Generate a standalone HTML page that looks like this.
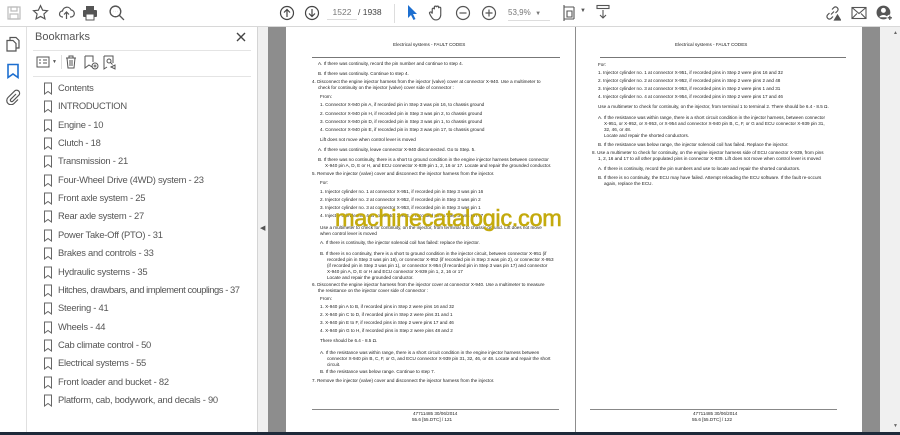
<!DOCTYPE html>
<html><head><meta charset="utf-8"><style>
*{margin:0;padding:0;box-sizing:border-box}
body{width:900px;height:435px;overflow:hidden;background:#fff;font-family:"Liberation Sans",Arial,sans-serif;position:relative}
.a{position:absolute}
.tb{left:0;top:0;width:900px;height:27px;background:#fff;border-bottom:1px solid #d8d8d8}
.rail{left:0;top:27px;width:27px;height:405px;background:#fff;border-right:1px solid #e0e0e0}
.panel{left:27px;top:27px;width:231px;height:405px;background:#fff;border-right:1px solid #d4d4d4}
.bm{left:45px;font-size:9.4px;letter-spacing:-0.25px;color:#555;white-space:nowrap}
.bm svg{position:absolute;left:-2px;top:0}
.bm span{position:absolute;left:13px;top:0}
.pg{background:#fff;top:27px;height:405px}
.t{position:absolute;font-size:4.6px;color:#222;white-space:nowrap;line-height:5px}
.ic{position:absolute}
</style></head><body>
<div class="a tb"></div>
<svg class="ic" style="left:6px;top:5px" width="16" height="16" viewBox="0 0 16 16" fill="none" stroke="#bbb" stroke-width="1.2"><rect x="2" y="2" width="12" height="12"/><rect x="5" y="2" width="6" height="4"/><rect x="4" y="9" width="8" height="5"/></svg>
<svg class="ic" style="left:32px;top:4px" width="17" height="17" viewBox="0 0 16 16" fill="none" stroke="#555" stroke-width="1.1"><path d="M8 1.5l2 4.3 4.6.5-3.4 3.1 1 4.6L8 11.7 3.8 14l1-4.6L1.4 6.3 6 5.8z"/></svg>
<svg class="ic" style="left:58px;top:5px" width="17" height="16" viewBox="0 0 16 16" fill="none" stroke="#555" stroke-width="1.2"><path d="M4.5 12H4a3 3 0 0 1 0-6 4.5 4.5 0 0 1 8.6-1A3.3 3.3 0 0 1 12 12h-.5"/><path d="M8 14V7M5.5 9.5L8 7l2.5 2.5"/></svg>
<svg class="ic" style="left:82px;top:5px" width="16" height="16" viewBox="0 0 16 16" fill="#555"><rect x="4" y="1" width="8" height="4"/><rect x="1" y="5" width="14" height="7" rx="1"/><rect x="4" y="9" width="8" height="6" fill="#fff" stroke="#555"/></svg>
<svg class="ic" style="left:108px;top:4px" width="17" height="17" viewBox="0 0 16 16" fill="none" stroke="#555" stroke-width="1.3"><circle cx="7" cy="7" r="5"/><path d="M10.5 10.5L15 15"/><path d="M5 7h.1M7 7h.1M9 7h.1"/></svg>
<svg class="ic" style="left:279px;top:5px" width="16" height="16" viewBox="0 0 16 16" fill="none" stroke="#444" stroke-width="1.2"><circle cx="8" cy="8" r="6.5"/><path d="M8 12V4.5M5 7.5l3-3 3 3"/></svg>
<svg class="ic" style="left:304px;top:5px" width="16" height="16" viewBox="0 0 16 16" fill="none" stroke="#444" stroke-width="1.2"><circle cx="8" cy="8" r="6.5"/><path d="M8 4v7.5M5 8.5l3 3 3-3"/></svg>
<div class="a" style="left:327px;top:7px;width:30px;font-size:8.5px;color:#777;text-align:center;border-bottom:1px solid #ddd;padding-bottom:2px">1522</div>
<div class="a" style="left:358px;top:7px;font-size:8.5px;color:#444">/ 1938</div>
<div class="a" style="left:394px;top:4px;width:1px;height:19px;background:#ddd"></div>
<svg class="ic" style="left:405px;top:4px" width="14" height="17" viewBox="0 0 14 17"><path d="M3 1v13l3-3 2.5 5 2-1-2.5-5H12z" fill="#1d6fd0"/></svg>
<svg class="ic" style="left:428px;top:4px" width="17" height="17" viewBox="0 0 16 16" fill="none" stroke="#555" stroke-width="1.1"><path d="M4 9V5a1 1 0 0 1 2 0V3a1 1 0 0 1 2 0v0a1 1 0 0 1 2 0v1a1 1 0 0 1 2 0v6c0 3-2 5-4.5 5S4 13.5 2.5 11l-1-2a1 1 0 0 1 2-.8L4 9"/></svg>
<svg class="ic" style="left:455px;top:5px" width="16" height="16" viewBox="0 0 16 16" fill="none" stroke="#555" stroke-width="1.2"><circle cx="8" cy="8" r="6.5"/><path d="M4.5 8h7"/></svg>
<svg class="ic" style="left:481px;top:5px" width="16" height="16" viewBox="0 0 16 16" fill="none" stroke="#555" stroke-width="1.2"><circle cx="8" cy="8" r="6.5"/><path d="M4.5 8h7M8 4.5v7"/></svg>
<div class="a" style="left:508px;top:8px;width:42px;font-size:8px;color:#777;border-bottom:1px solid #ddd;padding-bottom:3px">53,9% &nbsp;<span style="font-size:6px">▼</span></div>
<svg class="ic" style="left:562px;top:4px" width="16" height="18" viewBox="0 0 16 18" fill="none" stroke="#555" stroke-width="1.1"><path d="M2 1v16M2 3h10M2 15h10M12 3v12M5 7h5v6H5z"/></svg>
<div class="a" style="left:580px;top:8px;font-size:6px;color:#555">▼</div>
<svg class="ic" style="left:595px;top:4px" width="16" height="16" viewBox="0 0 16 16" fill="none" stroke="#555" stroke-width="1.1"><rect x="2" y="1.5" width="12" height="3"/><path d="M8 6v8M5 11l3 3 3-3"/></svg>
<svg class="ic" style="left:824px;top:5px" width="17" height="16" viewBox="0 0 16 16" fill="none" stroke="#555" stroke-width="1.2"><path d="M6.5 9.5l3-3M5 8L3 10a2.5 2.5 0 0 0 3.5 3.5L8.5 11.5M11 8l2-2a2.5 2.5 0 0 0-3.5-3.5L7.5 4.5"/><path d="M10 15l3-5 3 5z" fill="#555"/></svg>
<svg class="ic" style="left:851px;top:6px" width="16" height="14" viewBox="0 0 16 14" fill="none" stroke="#555" stroke-width="1.1"><rect x="1" y="1.5" width="14" height="11"/><path d="M1 1.5l7 6 7-6M1 12.5l5-5M15 12.5l-5-5"/></svg>
<svg class="ic" style="left:876px;top:4px" width="17" height="17" viewBox="0 0 16 16"><circle cx="7" cy="8" r="6.5" fill="#555"/><circle cx="7" cy="6" r="2.3" fill="#fff"/><path d="M3 12.5a4.5 4 0 0 1 8 0" fill="#fff"/><circle cx="13" cy="13" r="3" fill="#fff"/><path d="M13 11v4M11 13h4" stroke="#555" stroke-width="1.2"/></svg>

<div class="a rail"></div>
<svg class="ic" style="left:5px;top:36px" width="16" height="16" viewBox="0 0 16 16" fill="none" stroke="#555" stroke-width="1.2"><path d="M5 4V1.5h6l3 3V12h-3"/><path d="M2 4.5h6l3 3V15H2z"/></svg>
<svg class="ic" style="left:6px;top:63px" width="14" height="16" viewBox="0 0 14 16" fill="none" stroke="#1d6fd0" stroke-width="1.6"><path d="M2 1.5h10V14.5L7 11l-5 3.5z"/></svg>
<svg class="ic" style="left:5px;top:89px" width="16" height="16" viewBox="0 0 16 16" fill="none" stroke="#555" stroke-width="1.2"><path d="M11 5l-5.5 5.5a1.5 1.5 0 0 0 2 2L14 6a3 3 0 0 0-4.2-4.2L3 8.5a4.2 4.2 0 0 0 6 6L13 10.5"/></svg>

<div class="a panel"></div>
<div class="a" style="left:35px;top:31px;font-size:11px;color:#555">Bookmarks</div>
<svg class="ic" style="left:236px;top:32px" width="10" height="10" viewBox="0 0 10 10" stroke="#444" stroke-width="1.4"><path d="M1 1l8 8M9 1L1 9"/></svg>
<div class="a" style="left:33px;top:50px;width:218px;height:1px;background:#e4e4e4"></div>
<svg class="ic" style="left:36px;top:56px" width="14" height="12" viewBox="0 0 14 12" fill="none" stroke="#555" stroke-width="1"><rect x="1" y="1" width="12" height="10"/><path d="M3 4h2M7 4h4M3 7h2M7 7h4"/></svg>
<div class="a" style="left:52px;top:59px;font-size:5px;color:#555">▼</div>
<div class="a" style="left:61px;top:55px;width:1px;height:14px;background:#ddd"></div>
<svg class="ic" style="left:65px;top:55px" width="12" height="14" viewBox="0 0 12 14" fill="none" stroke="#555" stroke-width="1"><path d="M1 3h10M4 3V1h4v2M2 3l1 10h6l1-10M5 5v6M7 5v6"/></svg>
<svg class="ic" style="left:84px;top:55px" width="15" height="15" viewBox="0 0 15 15" fill="none" stroke="#555" stroke-width="1"><path d="M1 1h8v6M1 1v12l4-3 3 2"/><circle cx="11" cy="11" r="3"/><path d="M11 9.5v3M9.5 11h3"/></svg>
<svg class="ic" style="left:103px;top:55px" width="14" height="15" viewBox="0 0 14 15" fill="none" stroke="#555" stroke-width="1"><path d="M1 1h9v7M1 1v13l3-2"/><circle cx="6" cy="6" r="2"/><path d="M7.5 7.5l2 2M8 12l4-2v4z"/></svg>
<div class="a" style="left:33px;top:76px;width:218px;height:1px;background:#e4e4e4"></div>

<div id="bms"></div>
<div class="a" style="left:258px;top:27px;width:10px;height:405px;background:#f0f0f0"></div>
<div class="a" style="left:260px;top:224px;font-size:7px;color:#555">◀</div>

<div class="a" style="left:268px;top:27px;width:612px;height:405px;background:#8d8d8d"></div>
<div class="a pg" style="left:286px;width:289px"></div>
<div class="a pg" style="left:576px;width:286px"></div>
<div class="a" style="left:880px;top:27px;width:20px;height:405px;background:#f0f0f0"></div>
<div class="a" style="left:893px;top:30px;font-size:5px;color:#666">▲</div>
<div class="a" style="left:893px;top:423px;font-size:5px;color:#666">▼</div>
<div class="a" style="left:0;top:432px;width:900px;height:3px;background:#1e2a3a"></div>

<div id="p1"></div>
<div id="p2"></div>

<div class="a" style="left:335px;top:205px;font-size:23.5px;color:#c4aa0c;-webkit-text-stroke:0.6px #c4aa0c;letter-spacing:-0.3px">machinecatalogic.com</div>

<script>
var bm=["Contents","INTRODUCTION","Engine - 10","Clutch - 18","Transmission - 21","Four-Wheel Drive (4WD) system - 23","Front axle system - 25","Rear axle system - 27","Power Take-Off (PTO) - 31","Brakes and controls - 33","Hydraulic systems - 35","Hitches, drawbars, and implement couplings - 37","Steering - 41","Wheels - 44","Cab climate control - 50","Electrical systems - 55","Front loader and bucket - 82","Platform, cab, bodywork, and decals - 90"];
var h="";bm.forEach(function(s,i){var y=82+i*18.35;var st=(i==11)?' style="letter-spacing:-0.45px"':'';h+='<div class="a bm" style="top:'+y+'px"><svg width="10" height="13" viewBox="0 0 10 13" fill="none" stroke="#666" stroke-width="1"><path d="M1.5 1h7v11L5 9.5 1.5 12z"/></svg><span'+st+'>'+s+'</span></div>';});
document.getElementById("bms").innerHTML=h;
function P(id,L){var o='';L.forEach(function(l){o+='<div class="t" style="left:'+l[1]+'px;top:'+l[0]+'px">'+l[2]+'</div>';});document.getElementById(id).innerHTML=o;}
var p1=[[42,393,"Electrical systems - FAULT CODES"],
[61,318,"A.  If there was continuity, record the pin number and continue to step 4."],
[71,318,"B.  If there was continuity. Continue to step 4."],
[79,312,"4.  Disconnect the engine injector harness from the injector (valve) cover at connector X-940.  Use a multimeter to"],
[85,318,"check for continuity on the injector (valve) cover side of connector :"],
[94,320,"From:"],
[102,320,"1.  Connector X-940 pin A, if recorded pin in Step 3 was pin 16, to chassis ground"],
[111,320,"2.  Connector X-940 pin H, if recorded pin in Step 3 was pin 2, to chassis ground"],
[119,320,"3.  Connector X-940 pin D, if recorded pin in Step 3 was pin 1, to chassis ground"],
[127,320,"4.  Connector X-940 pin E, if recorded pin in Step 3 was pin 17, to chassis ground"],
[137,320,"Lift does not move when control lever is moved"],
[147,318,"A.  If there was continuity, leave connector X-940 disconnected.  Go to Step.  5."],
[157,318,"B.  If there was no continuity, there is a short to ground condition in the engine injector harness between connector"],
[163,325,"X-940 pin A, D, E or H, and ECU connector X-939 pin 1, 2, 16 or 17.  Locate and repair the grounded conductor."],
[171,312,"5.  Remove the injector (valve) cover and disconnect the injector harness from the injector."],
[180,320,"For:"],
[189,320,"1.  Injector cylinder no.  1 at connector X-951, if recorded pin in Step 3 was pin 16"],
[197,320,"2.  Injector cylinder no.  2 at connector X-952, if recorded pin in Step 3 was pin 2"],
[205,320,"3.  Injector cylinder no.  3 at connector X-953, if recorded pin in Step 3 was pin 1"],
[213,320,"4.  Injector cylinder no.  4 at connector X-954, if recorded pin in Step 3 was pin 17"],
[225,320,"Use a multimeter to check for continuity, on the injector, from terminal 1 to chassis ground.  Lift does not move"],
[231,320,"when control lever is moved"],
[240,320,"A.  If there is continuity, the injector solenoid coil has failed: replace the injector."],
[251,320,"B.  If there is no continuity, there is a short to ground condition in the injector circuit, between connector X-951 (if"],
[257,327,"recorded pin in Step 3 was pin 16), or connector X-952 (if recorded pin in Step 3 was pin 2), or connector X-953"],
[263,327,"(if recorded pin in Step 3 was pin 1), or connector X-954 (if recorded pin in Step 3 was pin 17) and connector"],
[269,327,"X-940 pin A, D, E or H and ECU connector X-939 pin 1, 2, 16 or 17"],
[275,327,"Locate and repair the grounded conductor."],
[282,312,"6.  Disconnect the engine injector harness from the injector cover at connector X-940.  Use a multimeter to measure"],
[288,318,"the resistance on the injector cover side of connector :"],
[296,320,"From:"],
[304,320,"1.  X-940 pin A to B, if recorded pins in Step 2 were pins 16 and 32"],
[312,320,"2.  X-940 pin C to D, if recorded pins in Step 2 were pins 31 and 1"],
[320,320,"3.  X-940 pin E to F, if recorded pins in Step 2 were pins 17 and 46"],
[328,320,"4.  X-940 pin G to H, if recorded pins in Step 2 were pins 48 and 2"],
[338,320,"There should be 6.4 - 8.5 Ω."],
[350,320,"A.  If the resistance was within range, there is a short circuit condition in the engine injector harness between"],
[356,327,"connector X-940 pin B, C, F, or G, and ECU connector X-939 pin 31, 32, 46, or 48.  Locate and repair the short"],
[362,327,"circuit."],
[369,320,"B.  If the resistance was below range.  Continue to step 7."],
[378,312,"7.  Remove the injector (valve) cover and disconnect the injector harness from the injector."],
[411,413,"47711485 30/06/2014"],[417,412,"55.6 [55.DTC] / 121"]];
var p2=[[42,675,"Electrical systems - FAULT CODES"],
[62,598,"For:"],
[70,598,"1.  Injector cylinder no. 1 at connector X-951, if recorded pins in Step 2 were pins 16 and 32"],
[78,598,"2.  Injector cylinder no. 2 at connector X-952, if recorded pins in Step 2 were pins 2 and 48"],
[86,598,"3.  Injector cylinder no. 3 at connector X-953, if recorded pins in Step 2 were pins 1 and 31"],
[94,598,"4.  Injector cylinder no. 4 at connector X-954, if recorded pins in Step 2 were pins 17 and 46"],
[104,598,"Use a multimeter to check for continuity, on the injector, from terminal 1 to terminal 2.  There should be 6.4 - 8.5 Ω."],
[115,598,"A.  If the resistance was within range, there is a short circuit condition in the injector harness, between connector"],
[121,604,"X-951, or X-952, or X-953, or X-954 and connector X-940 pin B, C, F, or G and ECU connector X-939 pin 31,"],
[127,604,"32, 46, or 48."],
[133,604,"Locate and repair the shorted conductors."],
[142,598,"B.  If the resistance was below range, the injector solenoid coil has failed.  Replace the injector."],
[150,592,"8.  Use a multimeter to check for continuity, on the engine injector harness side of ECU connector X-939, from pins"],
[156,598,"1, 2, 16 and 17 to all other populated pins in connector X-939.  Lift does not move when control lever is moved"],
[166,598,"A.  If there is continuity, record the pin numbers and use to locate and repair the shorted conductors."],
[175,598,"B.  If there is no continuity, the ECU may have failed.  Attempt reloading the ECU software.  If the fault re-occurs"],
[181,604,"again, replace the ECU."],
[411,693,"47711485 30/06/2014"],[417,692,"55.6 [55.DTC] / 122"]];
P("p1",p1);P("p2",p2);
</script>
<div class="a" style="left:312px;top:57px;width:248px;height:1px;background:#777"></div>
<div class="a" style="left:600px;top:57px;width:246px;height:1px;background:#777"></div>
<div class="a" style="left:312px;top:409px;width:247px;height:1px;background:#888"></div>
<div class="a" style="left:590px;top:409px;width:247px;height:1px;background:#888"></div>
</body></html>
